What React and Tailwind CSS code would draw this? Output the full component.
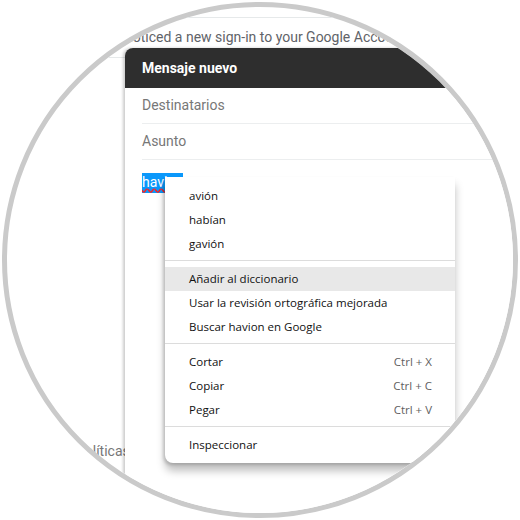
export default function App() {
  const roboto = { fontFamily: 'Roboto, "Liberation Sans", sans-serif' };
  const menuFont = { fontFamily: '"Open Sans", "Noto Sans", sans-serif' };

  const Item = ({ label, shortcut, active }) => (
    <div
      className={`flex h-[24px] items-center justify-between pl-[24px] pr-[23px] text-[11.5px] text-[#111111] ${active ? "bg-[#e8e8e8]" : ""}`}
    >
      <span>{label}</span>
      {shortcut && <span className="text-[#5f5f5f]">{shortcut}</span>}
    </div>
  );

  const Sep = () => (
    <div className="pt-[4px] pb-[6px]">
      <div className="h-px bg-[#dcdcdc]" />
    </div>
  );

  return (
    <div className="w-[520px] h-[520px] bg-white p-[2px]">
      <div className="w-[516px] h-[516px] rounded-full border-[5px] border-[#cacaca] overflow-hidden bg-white">
        <div className="relative -ml-[7px] -mt-[7px] w-[520px] h-[520px]" style={roboto}>
          {/* background page */}
          <div className="h-[18px] border-b border-[#e6e9ea]" />
          <div className="h-[40px] border-b border-[#e6e9ea] pl-[125px] flex items-center text-[14px] text-[#5f6368] whitespace-nowrap">
            noticed a new sign-in to your Google Account
          </div>
          <div className="mt-[383px] h-[20px] pl-[76px] flex items-center text-[14px] text-[#777777] whitespace-nowrap">
            Políticas
          </div>

          {/* compose window */}
          <div className="absolute left-[125px] top-[48px] w-[420px] h-[480px] bg-white rounded-tl-[8px] shadow-[-2px_0_3px_rgba(0,0,0,0.2)]">
            <div className="h-[40px] bg-[#2e2e2e] rounded-tl-[8px] flex items-center pl-[17px] text-[14px] font-bold text-white">
              Mensaje nuevo
            </div>
            <div className="ml-[17px]">
              <div className="h-[36px] border-b border-[#eceeef] flex items-center text-[14px] text-[#777777]">
                Destinatarios
              </div>
              <div className="h-[36px] border-b border-[#eceeef] flex items-center text-[14px] text-[#777777]">
                Asunto
              </div>
              <div className="pt-[10px]">
                <span className="inline-block h-[20px] leading-[18px] bg-[#0a98fb] text-white text-[14px] underline decoration-wavy decoration-[#ff2020] underline-offset-[1px]">
                  havion
                </span>
              </div>
            </div>
          </div>

          {/* context menu */}
          <div
            className="absolute left-[165px] top-[177px] w-[290px] h-[286px] bg-white rounded-b-[8px] pt-[7px] shadow-[0_8px_8px_rgba(0,0,0,0.25),-2px_2px_3px_rgba(0,0,0,0.15)]"
            style={menuFont}
          >
            <Item label="avión" />
            <Item label="habían" />
            <Item label="gavión" />
            <Sep />
            <Item label="Añadir al diccionario" active />
            <Item label="Usar la revisión ortográfica mejorada" />
            <Item label="Buscar havion en Google" />
            <Sep />
            <Item label="Cortar" shortcut="Ctrl + X" />
            <Item label="Copiar" shortcut="Ctrl + C" />
            <Item label="Pegar" shortcut="Ctrl + V" />
            <Sep />
            <Item label="Inspeccionar" />
          </div>
        </div>
      </div>
    </div>
  );
}
